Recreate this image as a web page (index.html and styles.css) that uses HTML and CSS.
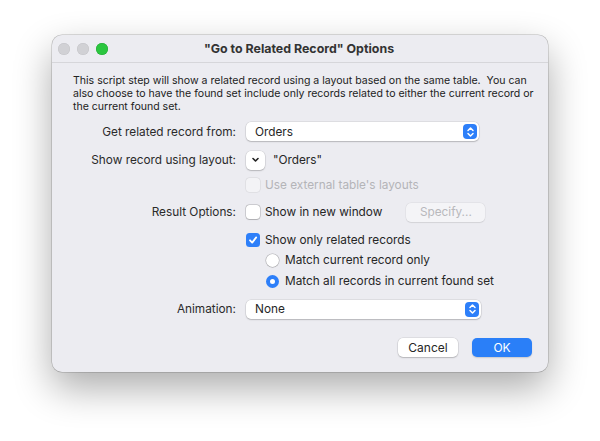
FILE: index.html
```html
<!DOCTYPE html>
<html>
<head>
<meta charset="utf-8">
<link rel="stylesheet" href="styles.css">
</head>
<body>
<div class="window">
  <div class="titlebar">
    <div class="lights">
      <span class="light gray"></span>
      <span class="light gray"></span>
      <span class="light green"></span>
    </div>
    <div class="title">"Go to Related Record" Options</div>
  </div>
  <div class="content">
    <p class="desc">This script step will show a related record using a layout based on the same table.&nbsp; You can also choose to have the found set include only records related to either the current record or the current found set.</p>
    <div class="form">
      <div class="label row1">Get related record from:</div>
      <div class="ctrl row1">
        <div class="popup wide">
          <span>Orders</span>
          <span class="stepper"><svg width="9" height="12" viewBox="0 0 9 12"><path d="M2 4.5 L4.5 2 L7 4.5 M2 7.5 L4.5 10 L7 7.5" fill="none" stroke="#fff" stroke-width="1.5" stroke-linecap="round" stroke-linejoin="round"/></svg></span>
        </div>
      </div>

      <div class="label row2">Show record using layout:</div>
      <div class="ctrl row2">
        <div class="minibtn"><svg width="9" height="6" viewBox="0 0 9 6"><path d="M2 1.5 L4.5 4 L7 1.5" fill="none" stroke="#222" stroke-width="1.6" stroke-linecap="round" stroke-linejoin="round"/></svg></div>
        <span class="layoutname">"Orders"</span>
      </div>

      <div class="label row3"></div>
      <div class="ctrl row3 disabled">
        <span class="check dis"></span><span>Use external table's layouts</span>
      </div>

      <div class="label row4">Result Options:</div>
      <div class="ctrl row4">
        <span class="check"></span><span>Show in new window</span>
        <span class="specify">Specify...</span>
      </div>

      <div class="label row5"></div>
      <div class="ctrl row5">
        <span class="check on"><svg width="10" height="10" viewBox="0 0 10 10"><path d="M2 5.3 L4.2 7.6 L8.2 2.4" fill="none" stroke="#fff" stroke-width="1.8" stroke-linecap="round" stroke-linejoin="round"/></svg></span><span>Show only related records</span>
      </div>

      <div class="label row6"></div>
      <div class="ctrl row6 indent">
        <span class="radio"></span><span>Match current record only</span>
      </div>

      <div class="label row7"></div>
      <div class="ctrl row7 indent">
        <span class="radio on"></span><span>Match all records in current found set</span>
      </div>

      <div class="label row8">Animation:</div>
      <div class="ctrl row8">
        <div class="popup wide2">
          <span>None</span>
          <span class="stepper"><svg width="9" height="12" viewBox="0 0 9 12"><path d="M2 4.5 L4.5 2 L7 4.5 M2 7.5 L4.5 10 L7 7.5" fill="none" stroke="#fff" stroke-width="1.5" stroke-linecap="round" stroke-linejoin="round"/></svg></span>
        </div>
      </div>
    </div>
    <div class="buttons">
      <span class="btn">Cancel</span>
      <span class="btn primary">OK</span>
    </div>
  </div>
</div>
</body>
</html>
```
FILE: styles.css
```css
html, body {
  margin: 0;
  padding: 0;
  background: #ffffff;
}
body {
  width: 600px;
  height: 441px;
  overflow: hidden;
  font-family: Inter, "Liberation Sans", sans-serif;
  color: #262626;
}
.window {
  margin: 35px 0 0 52px;
  width: 496px;
  height: 337px;
  background: #ececf1;
  border-radius: 10px;
  box-shadow: 0 0 0 0.5px rgba(0,0,0,0.25), 0 16px 38px rgba(0,0,0,0.33);
  display: flex;
  flex-direction: column;
  box-sizing: border-box;
}
.titlebar {
  height: 27px;
  border-bottom: 1px solid #d6d6da;
  display: flex;
  align-items: center;
}
.lights {
  display: flex;
  gap: 7px;
  padding-left: 6px;
}
.light {
  width: 12px;
  height: 12px;
  border-radius: 50%;
  display: block;
}
.light.gray { background: #d1d1d5; box-shadow: inset 0 0 0 0.5px #c4c4c8; }
.light.green { background: #2bc63f; box-shadow: inset 0 0 0 0.5px #22a834; }
.title {
  flex: 1;
  text-align: center;
  font-weight: 700;
  font-size: 12.4px;
  color: #333;
  margin-right: 58px;
}
.content {
  padding: 11px 16px 0 21px;
  font-size: 11.5px;
}
.desc {
  margin: 0 -8px 0 0;
  font-size: 10.55px;
  line-height: 13px;
  color: #222;
}
.form {
  display: grid;
  grid-template-columns: 163px 1fr;
  column-gap: 10px;
  margin-top: 9px;
  font-size: 11.8px;
}
.label {
  text-align: right;
  display: flex;
  align-items: center;
  justify-content: flex-end;
  color: #2a2a2a;
}
.ctrl {
  display: flex;
  align-items: center;
}
.row1 { height: 19px; }
.row2 { height: 20px; margin-top: 9px; }
.row3 { height: 16px; margin-top: 7px; }
.row4 { height: 20px; margin-top: 9px; }
.row5 { height: 16px; margin-top: 10px; }
.row6 { height: 16px; margin-top: 4px; }
.row7 { height: 16px; margin-top: 5px; }
.row8 { height: 20px; margin-top: 10px; }
.popup {
  height: 19px;
  background: #fff;
  border-radius: 5px;
  box-shadow: 0 0 0 0.5px rgba(0,0,0,0.12), 0 1px 1.5px rgba(0,0,0,0.18);
  display: flex;
  align-items: center;
  justify-content: space-between;
  padding: 0 2px 0 9px;
  box-sizing: border-box;
}
.popup.wide { width: 233px; }
.popup.wide2 { width: 235px; }
.stepper {
  width: 14px;
  height: 15px;
  border-radius: 4px;
  background: #2d7ff9;
  display: flex;
  align-items: center;
  justify-content: center;
}
.minibtn {
  width: 19px;
  height: 19px;
  background: #fff;
  border-radius: 5px;
  box-shadow: 0 0 0 0.5px rgba(0,0,0,0.12), 0 1px 1.5px rgba(0,0,0,0.18);
  display: flex;
  align-items: center;
  justify-content: center;
}
.layoutname { margin-left: 8px; }
.check {
  width: 14px;
  height: 14px;
  box-sizing: border-box;
  border-radius: 3.5px;
  background: #fff;
  box-shadow: 0 0 0 0.5px rgba(0,0,0,0.25), 0 0.5px 1px rgba(0,0,0,0.15);
  margin-right: 5px;
  display: flex;
  align-items: center;
  justify-content: center;
}
.check.dis {
  background: #f3f3f6;
  box-shadow: 0 0 0 0.5px rgba(0,0,0,0.1);
}
.check.on { background: #2d7ff9; box-shadow: none; }
.disabled { color: #b4b4b8; }
.specify {
  margin-left: 24px;
  width: 79px;
  height: 19px;
  border-radius: 5px;
  background: #f4f4f7;
  box-shadow: 0 0 0 0.5px rgba(0,0,0,0.06), 0 0.5px 1px rgba(0,0,0,0.08);
  color: #b8b8bc;
  display: flex;
  align-items: center;
  justify-content: center;
}
.indent { padding-left: 20px; }
.radio {
  width: 13px;
  height: 13px;
  border-radius: 50%;
  background: #fff;
  box-shadow: 0 0 0 0.5px rgba(0,0,0,0.25), 0 0.5px 1px rgba(0,0,0,0.15);
  margin-right: 6px;
  box-sizing: border-box;
}
.radio.on {
  box-shadow: none;
  border: 4px solid #2d7ff9;
  background: #fff;
}
.buttons {
  display: flex;
  justify-content: flex-end;
  gap: 14px;
  margin-top: 19px;
}
.btn {
  width: 60px;
  height: 19px;
  border-radius: 5px;
  background: #fff;
  box-shadow: 0 0 0 0.5px rgba(0,0,0,0.12), 0 1px 1.5px rgba(0,0,0,0.18);
  display: flex;
  align-items: center;
  justify-content: center;
  font-size: 12px;
}
.btn.primary {
  background: #2a7ff8;
  color: #fff;
  box-shadow: 0 1px 1.5px rgba(0,0,0,0.15);
}
```
